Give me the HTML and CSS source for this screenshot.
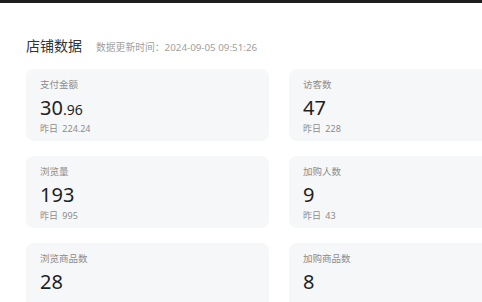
FILE: index.html
```html
<!DOCTYPE html>
<html lang="zh-CN">
<head>
  <meta charset="UTF-8">
  <meta name="viewport" content="width=device-width, initial-scale=1.0">
  <title>店铺数据</title>
  <link rel="stylesheet" href="styles.css">
</head>
<body>
  <div class="topbar"></div>

  <div class="container">
    <!-- Header -->
    <div class="header">
      <h1>店铺数据</h1>
      <span class="updated">数据更新时间：2024-09-05 09:51:26</span>
    </div>

    <!-- Stats grid -->
    <div class="stats">
      <div class="card">
        <div class="label">支付金额</div>
        <div class="value">30<span class="decimal">.96</span></div>
        <div class="prev">昨日 224.24</div>
      </div>
      <div class="card">
        <div class="label">访客数</div>
        <div class="value">47</div>
        <div class="prev">昨日 228</div>
      </div>
      <div class="card">
        <div class="label">浏览量</div>
        <div class="value">193</div>
        <div class="prev">昨日 995</div>
      </div>
      <div class="card">
        <div class="label">加购人数</div>
        <div class="value">9</div>
        <div class="prev">昨日 43</div>
      </div>
      <div class="card">
        <div class="label">浏览商品数</div>
        <div class="value">28</div>
      </div>
      <div class="card">
        <div class="label">加购商品数</div>
        <div class="value">8</div>
      </div>
    </div>
  </div>
</body>
</html>
```

FILE: styles.css
```css
html, body {
  overflow: hidden;
}
body {
  font-family: "Noto Sans", "Noto Sans CJK SC", sans-serif;
  margin: 0;
  padding: 0;
  background-color: #ffffff;
  color: #222222;
}
.topbar {
  height: 3px;
  background-color: #1e1e1e;
}
.container {
  padding: 33px 0 0 26px;
}
.header {
  display: flex;
  align-items: baseline;
  gap: 14px;
  height: 20px;
  margin-bottom: 13px;
}
.header h1 {
  margin: 0;
  font-size: 14px;
  line-height: 20px;
  font-weight: 400;
  color: #333333;
}
.updated {
  font-size: 9.8px;
  color: #a0a0a0;
}
.stats {
  display: grid;
  grid-template-columns: 243px 243px;
  gap: 15px 20px;
}
.card {
  height: 72px;
  box-sizing: border-box;
  padding: 9px 14px 0;
  background-color: #f6f7f9;
  border-radius: 8px;
  overflow: hidden;
}
.label {
  height: 14px;
  font-size: 9.5px;
  line-height: 14px;
  color: #8c8c8c;
  margin-bottom: 3px;
}
.value {
  height: 26px;
  font-size: 20px;
  line-height: 26px;
  color: #1f1f1f;
}
.decimal {
  font-size: 14px;
}
.prev {
  height: 14px;
  margin-top: 1px;
  font-size: 9px;
  line-height: 14px;
  color: #8c8c8c;
  word-spacing: 2px;
}
```
